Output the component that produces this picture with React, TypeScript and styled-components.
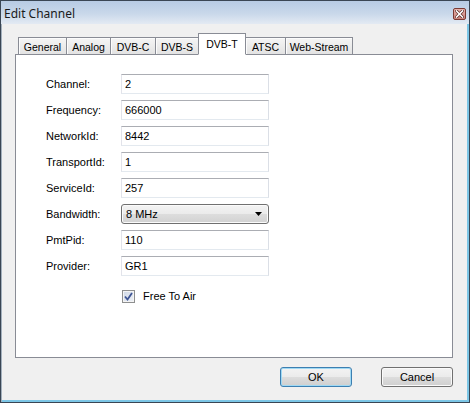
import { Fragment } from 'react';
import styled, { createGlobalStyle } from 'styled-components';

const GlobalStyle = createGlobalStyle`
  * { box-sizing: border-box; }
  html, body {
    margin: 0;
    padding: 0;
    background: #f0f0f0;
  }
  body {
    font-family: "Liberation Sans", Arial, sans-serif;
    font-size: 11px;
    color: #000;
  }
`;

const Window = styled.div`
  width: 470px;
  height: 403px;
  display: flex;
  flex-direction: column;
  background: #f0f0f0;
  border: 1px solid #3a4654;
  box-shadow: inset 1px 0 0 #a3b0bd, inset -2px 0 0 #7cc6e6, inset 0 -2px 0 #7cc6e6;
`;

const TitleBar = styled.div`
  height: 23px;
  display: flex;
  align-items: center;
  justify-content: space-between;
  padding: 1px 3px 0 3px;
  background: linear-gradient(#b7cbe4 0%, #c9d8ea 55%, #e3eaf3 100%);
`;

const Title = styled.span`
  font-family: "Noto Sans", "Open Sans", sans-serif;
  font-size: 12px;
  color: #1a1a1a;
`;

const CloseButton = styled.div`
  width: 13px;
  height: 12px;
  margin-top: 2px;
  border: 1px solid #7b3a33;
  border-radius: 2px;
  background: linear-gradient(#e8b3ad, #c9837b);
  display: flex;
  align-items: center;
  justify-content: center;
`;

const Body = styled.div`
  flex: 1;
  display: flex;
  flex-direction: column;
  padding: 9px 16px 0 14px;
`;

const TabStrip = styled.div`
  height: 22px;
  display: flex;
  align-items: flex-end;
  padding-left: 3px;
  margin-bottom: -1px;
  position: relative;
  z-index: 1;
`;

const Tab = styled.div<{ $w: number; $active?: boolean }>`
  width: ${(p) => p.$w}px;
  height: ${(p) => (p.$active ? 22 : 18)}px;
  margin-left: -1px;
  display: flex;
  align-items: center;
  justify-content: center;
  font-size: 10.5px;
  border: 1px solid #898c95;
  border-bottom-color: ${(p) => (p.$active ? '#fff' : '#898c95')};
  background: ${(p) =>
    p.$active ? '#fff' : 'linear-gradient(#f5f5f5, #e3e3e3)'};
  box-shadow: ${(p) => (p.$active ? 'none' : 'inset 1px 1px 0 #fcfcfc')};
  position: relative;
  z-index: ${(p) => (p.$active ? 2 : 1)};
  padding-top: ${(p) => (p.$active ? 0 : 1)}px;
  &:first-child {
    margin-left: 0;
  }
`;

const Panel = styled.div`
  height: 304px;
  border: 1px solid #898c95;
  background: #fff;
  padding: 19px 0 0 30px;
`;

const Form = styled.div`
  display: grid;
  grid-template-columns: 75px 148px;
  grid-auto-rows: 20px;
  row-gap: 6px;
  align-items: center;
`;

const Label = styled.span`
  white-space: nowrap;
`;

const TextBox = styled.input`
  height: 20px;
  width: 100%;
  margin: 0;
  padding: 0 3px;
  border: 1px solid;
  border-color: #abadb3 #dbdfe6 #e3e9ef #e2e3ea;
  font-family: "Liberation Sans", Arial, sans-serif;
  font-size: 11px;
  color: #000;
  background: #fff;
  outline: none;
`;

const Combo = styled.div`
  height: 20px;
  display: flex;
  align-items: center;
  justify-content: space-between;
  padding: 0 6px 0 4px;
  border: 1px solid #707070;
  border-radius: 3px;
  background: linear-gradient(#f3f3f3 0%, #ebebeb 50%, #dddddd 51%, #d2d2d2 100%);
  box-shadow: inset 0 0 0 1px #fbfbfb;
`;

const CheckRow = styled.label`
  grid-column: 2;
  height: 13px;
  margin-top: 8px;
  display: flex;
  align-items: center;
  gap: 8px;
  padding-left: 1px;
`;

const CheckBox = styled.span`
  width: 13px;
  height: 13px;
  border: 1px solid #8e8f8f;
  background: linear-gradient(135deg, #cfd8e6, #eef1f6);
  box-shadow: inset 0 0 0 1px #f4f4f4;
  display: flex;
  align-items: center;
  justify-content: center;
`;

const ButtonRow = styled.div`
  display: flex;
  justify-content: flex-end;
  gap: 29px;
  margin-top: 9px;
`;

const Button = styled.button<{ $default?: boolean }>`
  width: 72px;
  height: 20px;
  margin: 0;
  padding: 0;
  font-family: "Liberation Sans", Arial, sans-serif;
  font-size: 11px;
  color: #000;
  border: 1px solid ${(p) => (p.$default ? '#3c7fb1' : '#707070')};
  border-radius: 3px;
  background: linear-gradient(#f3f3f3 0%, #ebebeb 50%, #dddddd 51%, #cfcfcf 100%);
  box-shadow: inset 0 0 0 1px ${(p) => (p.$default ? '#9fd9f4' : '#fafafa')};
`;

const tabs = [
  { name: 'General', w: 49 },
  { name: 'Analog', w: 45 },
  { name: 'DVB-C', w: 46 },
  { name: 'DVB-S', w: 44 },
  { name: 'DVB-T', w: 48, active: true },
  { name: 'ATSC', w: 41 },
  { name: 'Web-Stream', w: 68 },
];

const fields: [string, string][] = [
  ['Channel:', '2'],
  ['Frequency:', '666000'],
  ['NetworkId:', '8442'],
  ['TransportId:', '1'],
  ['ServiceId:', '257'],
];

const fieldsAfter: [string, string][] = [
  ['PmtPid:', '110'],
  ['Provider:', 'GR1'],
];

function FieldRow({ label, value }: { label: string; value: string }) {
  return (
    <Fragment>
      <Label>{label}</Label>
      <TextBox readOnly defaultValue={value} />
    </Fragment>
  );
}

export default function App() {
  return (
    <>
      <GlobalStyle />
      <Window>
        <TitleBar>
          <Title>Edit Channel</Title>
          <CloseButton>
            <svg width="9" height="8" viewBox="0 0 9 8">
              <path d="M1.5 1 L7.5 7 M7.5 1 L1.5 7" stroke="#5a2a25" strokeWidth="3" strokeLinecap="square" />
              <path d="M1.5 1 L7.5 7 M7.5 1 L1.5 7" stroke="#fff" strokeWidth="1.6" strokeLinecap="square" />
            </svg>
          </CloseButton>
        </TitleBar>
        <Body>
          <TabStrip>
            {tabs.map((t) => (
              <Tab key={t.name} $w={t.w} $active={t.active}>
                {t.name}
              </Tab>
            ))}
          </TabStrip>
          <Panel>
            <Form>
              {fields.map(([label, value]) => (
                <FieldRow key={label} label={label} value={value} />
              ))}
              <Label>Bandwidth:</Label>
              <Combo>
                <span>8 MHz</span>
                <svg width="7" height="4" viewBox="0 0 7 4">
                  <path d="M0 0 H7 L3.5 4 Z" fill="#000" />
                </svg>
              </Combo>
              {fieldsAfter.map(([label, value]) => (
                <FieldRow key={label} label={label} value={value} />
              ))}
              <CheckRow>
                <CheckBox>
                  <svg width="9" height="9" viewBox="0 0 9 9">
                    <path d="M1 4.5 L3.5 7.5 L8 1" stroke="#3f5594" strokeWidth="1.8" fill="none" />
                  </svg>
                </CheckBox>
                Free To Air
              </CheckRow>
            </Form>
          </Panel>
          <ButtonRow>
            <Button $default>OK</Button>
            <Button>Cancel</Button>
          </ButtonRow>
        </Body>
      </Window>
    </>
  );
}
